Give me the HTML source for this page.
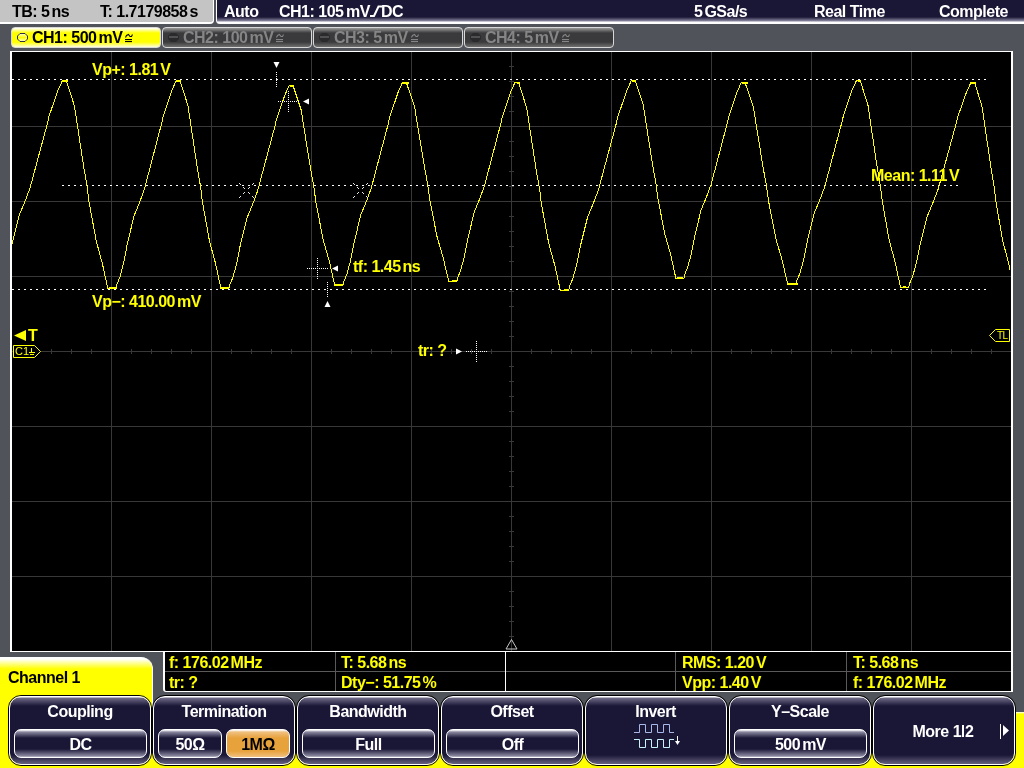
<!DOCTYPE html>
<html><head><meta charset="utf-8">
<style>
*{margin:0;padding:0;box-sizing:border-box}
html,body{width:1024px;height:768px;overflow:hidden;background:#50545a;font-family:"Liberation Sans",sans-serif;font-weight:bold}
.a{position:absolute}
.t{position:absolute;white-space:nowrap;font-size:16px;line-height:16px;letter-spacing:-0.5px}
i{display:inline-block;width:2px}
.t,.tx,.lb,.sub{will-change:transform}
#tl{left:0;top:0;width:214px;height:24px;background:#c4c4c4;border-right:1px solid #fff;border-bottom:2px solid #fff;border-bottom-right-radius:4px}
#tr{left:216px;top:0;width:808px;height:24px;background:linear-gradient(#1a1635 0,#1a1635 17px,#8a88a0 21px,#fff 22px);border-left:1px solid #fff;border-bottom-left-radius:4px}
.tab{position:absolute;top:27px;height:21px;width:150px;border-radius:4px;border:1px solid #d8d8d8;background:linear-gradient(#9a9a9a 0,#3a3a3c 5px,#3a3a3c 14px,#7a7a7a 20px);color:#858585}
.tab .tx{position:absolute;left:20px;top:2px;font-size:16px;line-height:16px;letter-spacing:-0.5px;white-space:nowrap}
.oct{position:absolute;left:5px;top:5px;width:11px;height:9px;border-radius:3px}
#grid{left:10px;top:51px;width:1003px;height:601px;background:#000;border-left:2px solid #fff;border-right:2px solid #fff;border-top:1px solid #fff;border-bottom:1px solid #fff}
#meas{left:163px;top:651px;width:850px;height:41px;background:#000;border:2px solid #fff;border-top:1px solid #fff;border-bottom:1px solid #fff;border-bottom-left-radius:3px}
#yel{left:0;top:712px;width:1024px;height:56px;background:linear-gradient(#fff 0,#ffff00 2px)}
#ch1tab{left:0;top:657px;width:153px;height:60px;background:linear-gradient(#fff 0,#fff 2px,#ffff00 12px);border-top-right-radius:12px;border-right:1px solid #fff}
.sk{position:absolute;top:695px;width:144px;height:71px;border:1px solid #000;border-radius:13px;overflow:hidden}
.sk .in{position:absolute;left:0;top:0;right:0;bottom:0;border:1px solid #fff;border-radius:12px;background:linear-gradient(#fff 0,#6e6a86 1px,#1a1636 9px,#1a1636 58px,#6e6a86 68px,#fff 69px)}
.sk .lb{position:absolute;left:0;right:0;top:8px;text-align:center;color:#fff;font-size:16px;line-height:16px;letter-spacing:-0.5px}
.sub{position:absolute;top:33px;padding-top:1px;height:29px;border:1px solid #fff;border-radius:7px;background:linear-gradient(#fff 0,#8a88a0 2px,#1a1636 8px,#1a1636 19px,#8a88a0 26px,#fff 28px);color:#fff;text-align:center;font-size:16px;line-height:28px;letter-spacing:-0.5px}
.y{color:#ffff00}
svg{position:absolute;left:0;top:0}
svg.cg{position:static;vertical-align:top;margin-left:3px}
</style></head><body>
<div class="a" id="tl"></div>
<div class="a" id="tr"></div>
<div class="t" style="left:12px;top:4px;color:#000">TB: 5<i></i>ns</div>
<div class="t" style="left:100px;top:4px;color:#000">T: 1.7179858<i></i>s</div>
<div class="t" style="left:224px;top:4px;color:#fff">Auto</div>
<div class="t" style="left:279px;top:4px;color:#fff">CH1: 105</div>
<div class="t" style="left:346px;top:4px;color:#fff">mV</div>
<div class="t" style="left:381px;top:4px;color:#fff">DC</div>
<svg width="14" height="12" style="left:369px;top:5px" viewBox="0 0 14 12"><path d="M1 11 H5 L9.5 1.5 H13" fill="none" stroke="#fff" stroke-width="2" stroke-linejoin="miter"/></svg>
<div class="t" style="left:694px;top:4px;color:#fff">5<i></i>GSa/s</div>
<div class="t" style="left:814px;top:4px;color:#fff">Real Time</div>
<div class="t" style="left:939px;top:4px;color:#fff">Complete</div>

<div class="tab" style="left:11px;background:linear-gradient(#fff 0,#ffff00 5px,#ffff00 14px,#fff 20px);color:#000"><svg style="left:5px;top:5px" width="11" height="9" viewBox="0 0 11 9"><defs><linearGradient id="og" x1="0" y1="0" x2="0" y2="1"><stop offset="0" stop-color="#ffffd0"/><stop offset="0.5" stop-color="#ffff00"/><stop offset="1" stop-color="#ffffd0"/></linearGradient></defs><path d="M3 0.5 H8 L10.5 3 V6 L8 8.5 H3 L0.5 6 V3 Z" fill="url(#og)" stroke="#2c2c50" stroke-width="1"/></svg><div class="tx">CH1: 500<i></i>mV<svg class="cg" width="9" height="16" viewBox="0 0 9 16"><path d="M0.5 7.5 L1.5 5.5 L3.5 4.5 L5 6.5 L6.5 6.5 L7.5 4.5" fill="none" stroke="currentColor" stroke-width="1.1"/><rect x="0" y="9" width="7" height="1.1" fill="currentColor"/><rect x="0" y="11" width="7" height="1.1" fill="currentColor"/></svg></div></div>
<div class="tab" style="left:162px"><svg style="left:5px;top:5px" width="11" height="9" viewBox="0 0 11 9"><path d="M3 0 H8 L11 3 V6 L8 9 H3 L0 6 V3 Z" fill="#2a2a2c"/><rect x="1" y="3" width="9" height="2" fill="#505052"/></svg><div class="tx">CH2: 100<i></i>mV<svg class="cg" width="9" height="16" viewBox="0 0 9 16"><path d="M0.5 7.5 L1.5 5.5 L3.5 4.5 L5 6.5 L6.5 6.5 L7.5 4.5" fill="none" stroke="currentColor" stroke-width="1.1"/><rect x="0" y="9" width="7" height="1.1" fill="currentColor"/><rect x="0" y="11" width="7" height="1.1" fill="currentColor"/></svg></div></div>
<div class="tab" style="left:313px"><svg style="left:5px;top:5px" width="11" height="9" viewBox="0 0 11 9"><path d="M3 0 H8 L11 3 V6 L8 9 H3 L0 6 V3 Z" fill="#2a2a2c"/><rect x="1" y="3" width="9" height="2" fill="#505052"/></svg><div class="tx">CH3: 5<i></i>mV<svg class="cg" width="9" height="16" viewBox="0 0 9 16"><path d="M0.5 7.5 L1.5 5.5 L3.5 4.5 L5 6.5 L6.5 6.5 L7.5 4.5" fill="none" stroke="currentColor" stroke-width="1.1"/><rect x="0" y="9" width="7" height="1.1" fill="currentColor"/><rect x="0" y="11" width="7" height="1.1" fill="currentColor"/></svg></div></div>
<div class="tab" style="left:464px"><svg style="left:5px;top:5px" width="11" height="9" viewBox="0 0 11 9"><path d="M3 0 H8 L11 3 V6 L8 9 H3 L0 6 V3 Z" fill="#2a2a2c"/><rect x="1" y="3" width="9" height="2" fill="#505052"/></svg><div class="tx">CH4: 5<i></i>mV<svg class="cg" width="9" height="16" viewBox="0 0 9 16"><path d="M0.5 7.5 L1.5 5.5 L3.5 4.5 L5 6.5 L6.5 6.5 L7.5 4.5" fill="none" stroke="currentColor" stroke-width="1.1"/><rect x="0" y="9" width="7" height="1.1" fill="currentColor"/><rect x="0" y="11" width="7" height="1.1" fill="currentColor"/></svg></div></div>

<div class="a" id="grid"></div>
<div class="a" id="meas"></div>
<div class="a" id="yel"></div>
<div class="a" id="ch1tab"></div>

<svg width="1024" height="768" viewBox="0 0 1024 768">
<g stroke="#383838" stroke-width="1" shape-rendering="crispEdges">
<line x1="111.5" y1="52" x2="111.5" y2="651"/>
<line x1="211.5" y1="52" x2="211.5" y2="651"/>
<line x1="311.5" y1="52" x2="311.5" y2="651"/>
<line x1="411.5" y1="52" x2="411.5" y2="651"/>
<line x1="511.5" y1="52" x2="511.5" y2="651"/>
<line x1="611.5" y1="52" x2="611.5" y2="651"/>
<line x1="711.5" y1="52" x2="711.5" y2="651"/>
<line x1="811.5" y1="52" x2="811.5" y2="651"/>
<line x1="911.5" y1="52" x2="911.5" y2="651"/>
<line x1="12" y1="126.5" x2="1011" y2="126.5"/>
<line x1="12" y1="201.5" x2="1011" y2="201.5"/>
<line x1="12" y1="276.5" x2="1011" y2="276.5"/>
<line x1="12" y1="351.5" x2="1011" y2="351.5"/>
<line x1="12" y1="426.5" x2="1011" y2="426.5"/>
<line x1="12" y1="501.5" x2="1011" y2="501.5"/>
<line x1="12" y1="576.5" x2="1011" y2="576.5"/>
<line x1="31.5" y1="349" x2="31.5" y2="354"/>
<line x1="51.5" y1="349" x2="51.5" y2="354"/>
<line x1="71.5" y1="349" x2="71.5" y2="354"/>
<line x1="91.5" y1="349" x2="91.5" y2="354"/>
<line x1="131.5" y1="349" x2="131.5" y2="354"/>
<line x1="151.5" y1="349" x2="151.5" y2="354"/>
<line x1="171.5" y1="349" x2="171.5" y2="354"/>
<line x1="191.5" y1="349" x2="191.5" y2="354"/>
<line x1="231.5" y1="349" x2="231.5" y2="354"/>
<line x1="251.5" y1="349" x2="251.5" y2="354"/>
<line x1="271.5" y1="349" x2="271.5" y2="354"/>
<line x1="291.5" y1="349" x2="291.5" y2="354"/>
<line x1="331.5" y1="349" x2="331.5" y2="354"/>
<line x1="351.5" y1="349" x2="351.5" y2="354"/>
<line x1="371.5" y1="349" x2="371.5" y2="354"/>
<line x1="391.5" y1="349" x2="391.5" y2="354"/>
<line x1="431.5" y1="349" x2="431.5" y2="354"/>
<line x1="451.5" y1="349" x2="451.5" y2="354"/>
<line x1="471.5" y1="349" x2="471.5" y2="354"/>
<line x1="491.5" y1="349" x2="491.5" y2="354"/>
<line x1="531.5" y1="349" x2="531.5" y2="354"/>
<line x1="551.5" y1="349" x2="551.5" y2="354"/>
<line x1="571.5" y1="349" x2="571.5" y2="354"/>
<line x1="591.5" y1="349" x2="591.5" y2="354"/>
<line x1="631.5" y1="349" x2="631.5" y2="354"/>
<line x1="651.5" y1="349" x2="651.5" y2="354"/>
<line x1="671.5" y1="349" x2="671.5" y2="354"/>
<line x1="691.5" y1="349" x2="691.5" y2="354"/>
<line x1="731.5" y1="349" x2="731.5" y2="354"/>
<line x1="751.5" y1="349" x2="751.5" y2="354"/>
<line x1="771.5" y1="349" x2="771.5" y2="354"/>
<line x1="791.5" y1="349" x2="791.5" y2="354"/>
<line x1="831.5" y1="349" x2="831.5" y2="354"/>
<line x1="851.5" y1="349" x2="851.5" y2="354"/>
<line x1="871.5" y1="349" x2="871.5" y2="354"/>
<line x1="891.5" y1="349" x2="891.5" y2="354"/>
<line x1="931.5" y1="349" x2="931.5" y2="354"/>
<line x1="951.5" y1="349" x2="951.5" y2="354"/>
<line x1="971.5" y1="349" x2="971.5" y2="354"/>
<line x1="991.5" y1="349" x2="991.5" y2="354"/>
<line x1="509" y1="66.5" x2="514" y2="66.5"/>
<line x1="509" y1="81.5" x2="514" y2="81.5"/>
<line x1="509" y1="96.5" x2="514" y2="96.5"/>
<line x1="509" y1="111.5" x2="514" y2="111.5"/>
<line x1="509" y1="141.5" x2="514" y2="141.5"/>
<line x1="509" y1="156.5" x2="514" y2="156.5"/>
<line x1="509" y1="171.5" x2="514" y2="171.5"/>
<line x1="509" y1="186.5" x2="514" y2="186.5"/>
<line x1="509" y1="216.5" x2="514" y2="216.5"/>
<line x1="509" y1="231.5" x2="514" y2="231.5"/>
<line x1="509" y1="246.5" x2="514" y2="246.5"/>
<line x1="509" y1="261.5" x2="514" y2="261.5"/>
<line x1="509" y1="291.5" x2="514" y2="291.5"/>
<line x1="509" y1="306.5" x2="514" y2="306.5"/>
<line x1="509" y1="321.5" x2="514" y2="321.5"/>
<line x1="509" y1="336.5" x2="514" y2="336.5"/>
<line x1="509" y1="366.5" x2="514" y2="366.5"/>
<line x1="509" y1="381.5" x2="514" y2="381.5"/>
<line x1="509" y1="396.5" x2="514" y2="396.5"/>
<line x1="509" y1="411.5" x2="514" y2="411.5"/>
<line x1="509" y1="441.5" x2="514" y2="441.5"/>
<line x1="509" y1="456.5" x2="514" y2="456.5"/>
<line x1="509" y1="471.5" x2="514" y2="471.5"/>
<line x1="509" y1="486.5" x2="514" y2="486.5"/>
<line x1="509" y1="516.5" x2="514" y2="516.5"/>
<line x1="509" y1="531.5" x2="514" y2="531.5"/>
<line x1="509" y1="546.5" x2="514" y2="546.5"/>
<line x1="509" y1="561.5" x2="514" y2="561.5"/>
<line x1="509" y1="591.5" x2="514" y2="591.5"/>
<line x1="509" y1="606.5" x2="514" y2="606.5"/>
<line x1="509" y1="621.5" x2="514" y2="621.5"/>
<line x1="509" y1="636.5" x2="514" y2="636.5"/>
</g>
<!-- measurement table lines -->
<g stroke="#5a5a5a" stroke-width="1" shape-rendering="crispEdges">
<line x1="165" y1="671.5" x2="1011" y2="671.5"/>
<line x1="335.5" y1="652" x2="335.5" y2="691"/>
<line x1="675.5" y1="652" x2="675.5" y2="691"/>
<line x1="846.5" y1="652" x2="846.5" y2="691"/>
</g>
<line x1="505.5" y1="652" x2="505.5" y2="691" stroke="#fff" shape-rendering="crispEdges"/>
<!-- dotted measurement lines -->
<g stroke="#fff" stroke-width="1" stroke-dasharray="2 4" shape-rendering="crispEdges">
<line x1="12" y1="79.5" x2="988" y2="79.5"/>
<line x1="12" y1="289.5" x2="988" y2="289.5"/>
<line x1="62" y1="185.5" x2="958" y2="185.5"/>
</g>
<!-- waveform -->
<polyline points="12.0,244.4 12.2,243.2 19.2,215.2 24.9,201.6 30.0,188.1 37.6,159.8 47.8,122.1 49.0,116.3 57.9,90.5 62.5,80.5 62.2,80.5 66.8,80.5 66.8,82.0 74.4,105.9 77.5,126.1 84.0,168.6 87.1,186.3 89.0,201.9 96.3,241.2 102.3,263.3 107.4,286.5 107.9,288.5 116.1,288.5 116.0,288.5 116.9,284.4 119.9,277.1 123.6,263.1 127.3,244.0 134.1,215.8 139.7,202.2 144.6,188.6 152.0,160.2 161.9,122.3 163.2,116.5 171.8,90.6 176.3,80.5 176.0,80.5 180.5,80.5 180.5,82.0 188.0,105.9 191.0,126.1 197.4,168.6 200.5,186.3 202.4,201.9 209.5,241.2 215.5,263.3 220.5,286.5 221.0,288.5 229.0,288.5 229.0,288.5 229.9,284.5 232.9,277.4 236.6,263.8 240.3,245.1 247.1,217.6 252.7,204.3 257.6,191.0 265.0,163.3 274.9,126.3 276.1,120.6 284.8,95.3 289.2,85.5 288.9,85.5 293.5,85.5 293.5,87.0 301.2,110.0 304.2,129.3 310.8,170.2 313.9,187.2 315.9,202.2 323.2,240.0 329.3,261.3 334.4,283.6 334.9,285.5 343.1,285.5 342.9,285.5 343.9,281.5 346.8,274.4 350.5,260.8 354.2,242.1 360.9,214.6 366.4,201.3 371.3,188.0 378.6,160.3 388.4,123.3 389.6,117.6 398.1,92.3 402.5,82.5 402.2,82.5 406.8,82.5 406.8,83.9 414.6,106.8 417.7,126.1 424.4,166.8 427.6,183.7 429.6,198.6 436.9,236.2 443.1,257.4 448.3,279.6 448.9,281.5 457.1,281.5 456.8,281.5 457.8,277.5 460.6,270.6 464.2,257.2 467.8,238.9 474.3,211.9 479.7,198.9 484.4,186.0 491.6,158.7 501.1,122.5 502.3,116.9 510.6,92.2 514.9,82.5 514.5,82.5 519.1,82.5 519.1,84.0 526.7,107.9 529.8,128.1 536.3,170.6 539.5,188.3 541.4,203.9 548.7,243.2 554.8,265.3 559.9,288.5 560.4,290.5 568.6,290.5 568.6,290.5 569.6,286.3 572.7,279.0 576.6,264.9 580.5,245.6 587.6,217.1 593.3,203.4 598.5,189.7 606.2,160.9 616.5,122.7 617.8,116.8 626.8,90.7 631.4,80.5 631.3,80.5 635.7,80.5 635.7,81.9 643.2,104.7 646.2,123.9 652.5,164.4 655.6,181.2 657.5,196.0 664.6,233.4 670.6,254.5 675.5,276.6 676.0,278.5 684.0,278.5 683.8,278.5 684.7,274.6 687.5,267.8 691.1,254.6 694.6,236.6 701.1,210.0 706.4,197.2 711.1,184.4 718.2,157.6 727.6,121.9 728.8,116.4 737.1,92.0 741.3,82.5 740.9,82.5 745.5,82.5 745.5,84.0 753.4,107.2 756.5,126.8 763.2,168.1 766.4,185.2 768.4,200.4 775.8,238.5 782.1,260.0 787.3,282.5 787.8,284.5 796.2,284.5 796.0,284.5 797.0,280.4 799.9,273.3 803.7,259.6 807.4,240.9 814.2,213.2 819.8,199.9 824.8,186.6 832.2,158.6 842.1,121.5 843.4,115.8 852.0,90.4 856.5,80.5 856.3,80.5 860.7,80.5 860.7,82.0 868.1,105.8 871.0,125.9 877.3,168.2 880.4,185.8 882.3,201.3 889.2,240.4 895.2,262.4 900.1,285.5 900.6,287.5 908.4,287.5 908.6,287.5 909.6,283.4 912.7,276.3 916.5,262.5 920.3,243.6 927.4,215.9 933.1,202.4 938.2,189.1 945.9,161.0 956.1,123.7 957.4,117.9 966.4,92.4 971.0,82.5 970.9,82.5 975.1,82.5 975.1,84.0 982.3,107.6 985.1,127.4 991.2,169.4 994.2,186.7 996.0,202.1 1002.7,240.8 1008.5,262.7 1010.0,270.1" fill="none" stroke="#ffff00" stroke-width="1" stroke-linejoin="miter" shape-rendering="crispEdges"/>
<g fill="#ffff00"><rect x="62" y="80" width="6" height="2"/><rect x="176" y="80" width="4" height="2"/><rect x="290" y="85" width="4" height="2"/><rect x="402" y="82" width="7" height="2"/><rect x="517" y="82" width="3" height="2"/><rect x="632" y="80" width="4" height="2"/><rect x="742" y="82" width="6" height="2"/><rect x="858" y="80" width="3" height="2"/><rect x="970" y="82" width="6" height="2"/><rect x="109" y="287" width="7" height="2"/><rect x="221" y="287" width="8" height="2"/><rect x="335" y="284" width="8" height="2"/><rect x="452" y="280" width="5" height="2"/><rect x="564" y="289" width="5" height="2"/><rect x="677" y="277" width="6" height="2"/><rect x="788" y="283" width="10" height="2"/><rect x="903" y="286" width="3" height="2"/></g>
<!-- cursors -->
<g stroke="#fff" stroke-width="1" stroke-dasharray="1 1" shape-rendering="crispEdges" fill="none">
<line x1="276.5" y1="72" x2="276.5" y2="88"/>
<line x1="288.5" y1="91" x2="288.5" y2="112"/>
<line x1="278" y1="101.5" x2="299" y2="101.5"/>
<line x1="317.5" y1="258" x2="317.5" y2="279"/>
<line x1="307" y1="268.5" x2="329" y2="268.5"/>
<line x1="327.5" y1="282" x2="327.5" y2="297"/>
<line x1="476.5" y1="341" x2="476.5" y2="362"/>
<line x1="466" y1="351.5" x2="487" y2="351.5"/>
</g>
<g fill="#e8e8e8"><rect x="239" y="183" width="1" height="1"/><rect x="353" y="183" width="1" height="1"/><rect x="240" y="184" width="1" height="1"/><rect x="354" y="184" width="1" height="1"/><rect x="243" y="187" width="1" height="1"/><rect x="357" y="187" width="1" height="1"/><rect x="244" y="188" width="1" height="1"/><rect x="358" y="188" width="1" height="1"/><rect x="244" y="192" width="1" height="1"/><rect x="358" y="192" width="1" height="1"/><rect x="243" y="193" width="1" height="1"/><rect x="357" y="193" width="1" height="1"/><rect x="240" y="196" width="1" height="1"/><rect x="354" y="196" width="1" height="1"/><rect x="239" y="197" width="1" height="1"/><rect x="353" y="197" width="1" height="1"/><rect x="253" y="183" width="1" height="1"/><rect x="367" y="183" width="1" height="1"/><rect x="252" y="184" width="1" height="1"/><rect x="366" y="184" width="1" height="1"/><rect x="249" y="187" width="1" height="1"/><rect x="363" y="187" width="1" height="1"/><rect x="248" y="188" width="1" height="1"/><rect x="362" y="188" width="1" height="1"/><rect x="248" y="192" width="1" height="1"/><rect x="362" y="192" width="1" height="1"/><rect x="249" y="193" width="1" height="1"/><rect x="363" y="193" width="1" height="1"/><rect x="252" y="196" width="1" height="1"/><rect x="366" y="196" width="1" height="1"/><rect x="253" y="197" width="1" height="1"/><rect x="367" y="197" width="1" height="1"/></g>
<g fill="#fff">
<path d="M273.5 62 L279.5 62 L276.5 68 Z"/>
<path d="M303 101.5 L309 98.5 L309 104.5 Z"/>
<path d="M332 268.5 L338 265.5 L338 271.5 Z"/>
<path d="M327.5 301 L330.5 307 L324.5 307 Z"/>
<path d="M462 351.5 L456 348.5 L456 354.5 Z"/>
</g>
<!-- trigger marker bottom -->
<path d="M511.5 639.5 L517 649 L506 649 Z" fill="none" stroke="#c8c8c8" stroke-width="1"/>
<!-- trigger level left -->
<path d="M14 335.5 L26 330 L26 341 Z" fill="#ffff00"/>
<path d="M13.5 345.5 L34.5 345.5 L40.5 351.5 L34.5 357.5 L13.5 357.5 Z" fill="#000" stroke="#ffff00" stroke-width="1"/>
<path d="M989.5 335.5 L995.5 329.5 L1009.5 329.5 L1009.5 341.5 L995.5 341.5 Z" fill="#000" stroke="#ffff00" stroke-width="1"/>
</svg>

<!-- grid labels -->
<div class="t y" style="left:92px;top:62px">Vp+: 1.81<i></i>V</div>
<div class="t y" style="left:871px;top:168px">Mean: 1.11<i></i>V</div>
<div class="t y" style="left:353px;top:259px">tf: 1.45<i></i>ns</div>
<div class="t y" style="left:92px;top:294px">Vp−: 410.00<i></i>mV</div>
<div class="t y" style="left:418px;top:343px">tr: ?</div>
<div class="t y" style="left:28px;top:328px;font-size:16px">T</div>
<div class="t y" style="left:15px;top:346px;font-size:11px;line-height:11px;font-weight:normal;letter-spacing:0">C1</div>
<svg width="1024" height="768" style="left:0;top:0;pointer-events:none"><path d="M31.5 348 V352 M29 352.5 H35 M30 354.5 H34" stroke="#ffff00" stroke-width="1" fill="none"/></svg>
<div class="t y" style="left:997px;top:331px;font-size:10px;line-height:10px;font-weight:normal">TL</div>

<!-- table text -->
<div class="t y" style="left:169px;top:655px">f: 176.02<i></i>MHz</div>
<div class="t y" style="left:169px;top:675px">tr: ?</div>
<div class="t y" style="left:341px;top:655px">T: 5.68<i></i>ns</div>
<div class="t y" style="left:341px;top:675px">Dty−: 51.75<i></i>%</div>
<div class="t y" style="left:682px;top:655px">RMS: 1.20<i></i>V</div>
<div class="t y" style="left:682px;top:675px">Vpp: 1.40<i></i>V</div>
<div class="t y" style="left:853px;top:655px">T: 5.68<i></i>ns</div>
<div class="t y" style="left:853px;top:675px">f: 176.02<i></i>MHz</div>

<div class="t" style="left:8px;top:670px;color:#000">Channel 1</div>

<div class="sk" style="left:8px"><div class="in"></div><div class="lb">Coupling</div><div class="sub" style="left:5px;width:133px">DC</div></div>
<div class="sk" style="left:152px"><div class="in"></div><div class="lb">Termination</div><div class="sub" style="left:5px;width:64px">50Ω</div><div class="sub" style="left:73px;width:64px;color:#000;background:linear-gradient(#fff 0,#f0c080 2px,#e8a23c 8px,#e8a23c 21px,#f0c080 27px,#fff 28px)">1MΩ</div></div>
<div class="sk" style="left:296px"><div class="in"></div><div class="lb">Bandwidth</div><div class="sub" style="left:5px;width:133px">Full</div></div>
<div class="sk" style="left:440px"><div class="in"></div><div class="lb">Offset</div><div class="sub" style="left:5px;width:133px">Off</div></div>
<div class="sk" style="left:584px"><div class="in"></div><div class="lb" style="left:-1px">Invert</div></div>
<div class="sk" style="left:728px"><div class="in"></div><div class="lb">Y–Scale</div><div class="sub" style="left:5px;width:133px">500<i></i>mV</div></div>
<div class="sk" style="left:872px"><div class="in"></div><div class="lb" style="top:28px;left:-2px;right:0">More&nbsp;1<b style="display:inline-block;width:2px;height:12px;background:#fff;margin:0 1px;vertical-align:0"></b>2</div></div>
<svg width="1024" height="768" viewBox="0 0 1024 768" style="pointer-events:none">
<path d="M1000.5 724 V739" stroke="#fff" stroke-width="1"/>
<path d="M1003 725 L1009 730.5 L1003 736 Z" fill="#fff"/>
<!-- invert icon -->
<path d="M634 732.5 H639.5 V724.5 H645.5 V732.5 H651.5 V724.5 H657.5 V732.5 H663.5 V724.5 H669.5 V732.5 H674" fill="none" stroke="#a8b8e8" stroke-width="1"/>
<path d="M634 739.5 H639.5 V747.5 H645.5 V739.5 H651.5 V747.5 H657.5 V739.5 H663.5 V747.5 H669.5 V739.5 H674" fill="none" stroke="#c8f4f8" stroke-width="1"/>
<path d="M677.5 736 V744" stroke="#fff" stroke-width="1"/>
<path d="M675 741 L680 741 L677.5 745 Z" fill="#fff"/>

</svg>
</body></html>
